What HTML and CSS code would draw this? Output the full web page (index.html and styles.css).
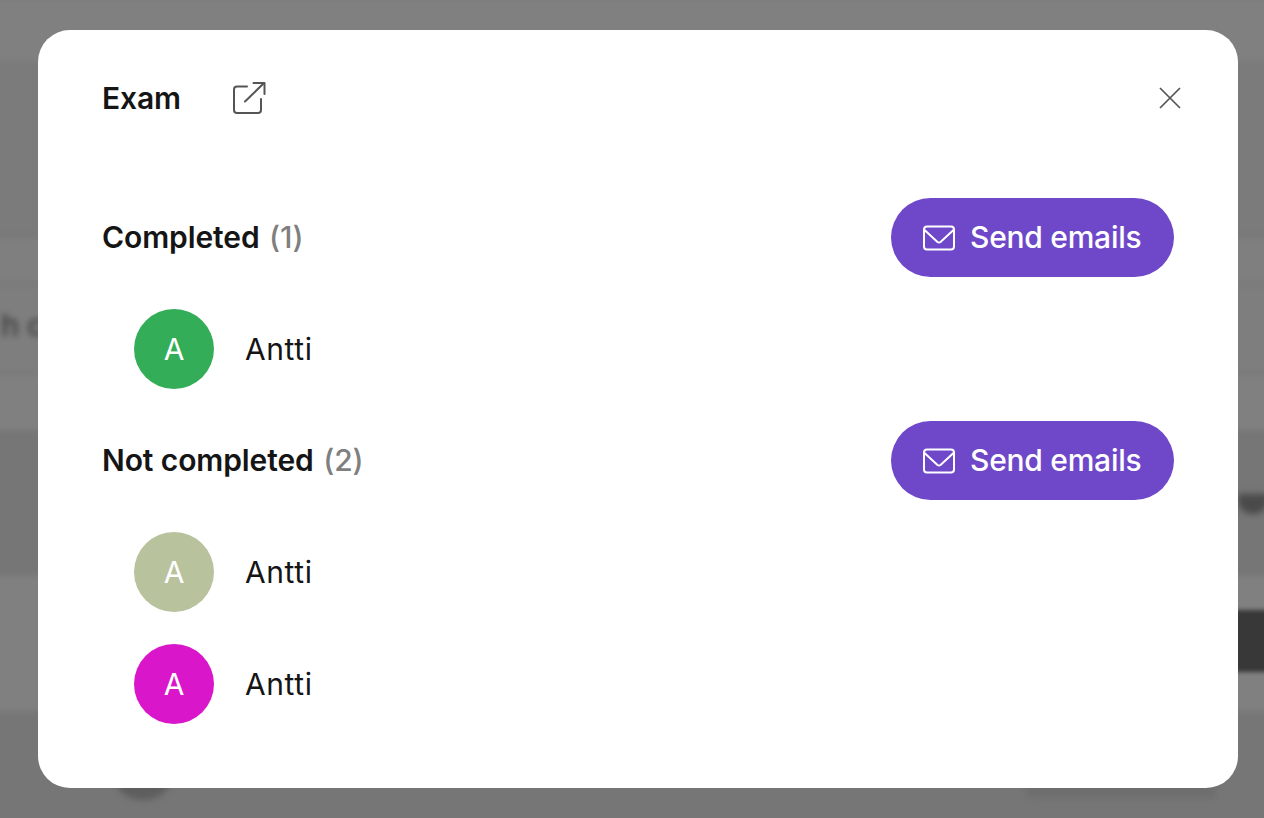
FILE: index.html
```html
<!DOCTYPE html>
<html lang="en">
<head>
<meta charset="utf-8">
<title>Exam</title>
<link rel="stylesheet" href="styles.css">
</head>
<body>
<div class="backdrop" aria-hidden="true">
  <div class="band band-top"></div>
  <div class="band band-a"></div>
  <div class="band band-line"></div>
  <div class="band band-b"></div>
  <div class="band band-line"></div>
  <div class="band band-c"><span class="ghost-text">h c</span></div>
  <div class="band band-line"></div>
  <div class="band band-d"></div>
  <div class="band band-e"></div>
  <div class="band band-f"></div>
  <div class="band band-g"></div>
</div>
<div class="ghost-dark"></div>
<div class="ghost-mark"></div>
<div class="ghost-dot"></div>
<div class="ghost-card"></div>

<main class="modal">
  <header class="modal-head">
    <div class="title-group">
      <h1 class="title">Exam</h1>
      <svg class="open-icon" width="34" height="34" viewBox="0 0 34 34" fill="none" stroke="#555" stroke-width="2" stroke-linecap="round" stroke-linejoin="round">
        <path d="M15 5.500H5a3 3 0 0 0-3 3V29a3 3 0 0 0 3 3h21a3 3 0 0 0 3-3V18"/>
        <path d="M13 20.500L32 2"/>
        <path d="M21.500 2H32.500V13"/>
      </svg>
    </div>
    <svg class="close-icon" width="24" height="24" viewBox="0 0 24 24" fill="none" stroke="#555" stroke-width="1.700">
      <path d="M2 2L22 22M22 2L2 22"/>
    </svg>
  </header>

  <section class="group">
    <div class="group-head">
      <h2 class="group-title">Completed <span class="count">(1)</span></h2>
      <button class="send" type="button">
        <svg class="mail" width="32" height="26" viewBox="0 0 32 26" fill="none" stroke="#fff" stroke-width="2" stroke-linejoin="round" stroke-linecap="round">
          <rect x="1" y="1.500" width="30" height="23" rx="3"/>
          <path d="M1.500 5L14.500 17a2.500 2.500 0 0 0 3 0L30.500 5"/>
        </svg>
        <span class="send-label">Send emails</span>
      </button>
    </div>
    <ul class="people">
      <li class="person"><span class="avatar av-green">A</span><span class="name">Antti</span></li>
    </ul>
  </section>

  <section class="group">
    <div class="group-head">
      <h2 class="group-title">Not completed <span class="count">(2)</span></h2>
      <button class="send" type="button">
        <svg class="mail" width="32" height="26" viewBox="0 0 32 26" fill="none" stroke="#fff" stroke-width="2" stroke-linejoin="round" stroke-linecap="round">
          <rect x="1" y="1.500" width="30" height="23" rx="3"/>
          <path d="M1.500 5L14.500 17a2.500 2.500 0 0 0 3 0L30.500 5"/>
        </svg>
        <span class="send-label">Send emails</span>
      </button>
    </div>
    <ul class="people">
      <li class="person"><span class="avatar av-sage">A</span><span class="name">Antti</span></li>
      <li class="person"><span class="avatar av-magenta">A</span><span class="name">Antti</span></li>
    </ul>
  </section>
</main>
</body>
</html>
```
FILE: styles.css
```css
* { box-sizing: border-box; }
html, body { margin: 0; height: 100%; }
body {
  background: #7a7a7a;
  font-family: "Inter", "Liberation Sans", sans-serif;
  color: #151515;
  overflow: hidden;
}
.backdrop {
  position: fixed;
  inset: -10px;
  filter: blur(3px);
  display: flex;
  flex-direction: column;
  padding-top: 10px;
}
.band { flex: none; }
.band-top { height: 60px; background: #808080; }
.band-a { height: 175px; background: #7b7b7b; }
.band-line { height: 2px; background: #727272; }
.band-b { height: 46px; background: #7f7f7f; }
.band-c { height: 87px; background: #7e7e7e; }
.band-d { height: 56px; background: #808080; }
.band-e { height: 146px; background: #767676; }
.band-f { height: 135px; background: #808080; }
.band-g { height: 122px; background: #767676; }
.ghost-text {
  display: block;
  margin: 22px 0 0 11px;
  font-size: 30px;
  font-weight: 600;
  color: #454545;
}
.ghost-dark {
  position: fixed;
  left: 1230px; top: 610px;
  width: 40px; height: 62px;
  background: #383838;
  filter: blur(2px);
}
.ghost-mark {
  position: fixed;
  left: 1238px; top: 494px;
  width: 30px; height: 20px;
  border-radius: 0 0 14px 14px;
  background: #4a4a4a;
  filter: blur(3px);
}
.ghost-dot {
  position: fixed;
  left: 116px; top: 760px;
  width: 54px; height: 40px;
  border-radius: 50%;
  background: #5e5e5e;
  filter: blur(3px);
}
.ghost-card {
  position: fixed;
  left: 1026px; top: 770px;
  width: 190px; height: 28px;
  background: #6e6e6e;
  filter: blur(3px);
}
.modal {
  position: fixed;
  left: 38px; top: 30px;
  width: 1200px; height: 758px;
  background: #fff;
  border-radius: 32px;
  padding: 32px 64px 0;
}
.modal-head {
  display: flex;
  align-items: center;
  justify-content: space-between;
  height: 72px;
  margin-bottom: 64px;
}
.title-group { display: flex; align-items: center; gap: 51px; }
.title, .group-title { margin: 0; font-size: 30px; font-weight: 600; line-height: 40px; letter-spacing: -0.1px; }
.group-title { margin-bottom: 2px; }
.close-icon { margin-right: -8px; }
.group { margin-bottom: 32px; }
.group-head {
  display: flex;
  align-items: center;
  justify-content: space-between;
  height: 79px;
}
.count { color: #7f7f7f; font-weight: 500; margin-left: 2px; }
.send {
  display: flex;
  align-items: center;
  gap: 15px;
  height: 79px;
  width: 283px;
  padding: 0 0 0 32px;
  border: 0;
  border-radius: 40px;
  background: #6e48c9;
  color: #fff;
  font: 500 30px "Inter", "Liberation Sans", sans-serif;
  letter-spacing: -0.25px;
}
.send-label { margin-bottom: 2px; }
.people {
  list-style: none;
  margin: 32px 0 0;
  padding: 0 0 0 32px;
  display: flex;
  flex-direction: column;
  gap: 32px;
}
.person { display: flex; align-items: center; gap: 32px; height: 80px; }
.avatar {
  width: 80px; height: 80px;
  border-radius: 50%;
  display: flex;
  align-items: center;
  justify-content: center;
  color: #fff;
  font-size: 30px;
}
.av-green { background: #33ad57; }
.av-sage { background: #b8c29d; }
.av-magenta { background: #d916c9; }
.name { font-size: 30px; letter-spacing: 0.6px; margin-left: -1px; }
```
